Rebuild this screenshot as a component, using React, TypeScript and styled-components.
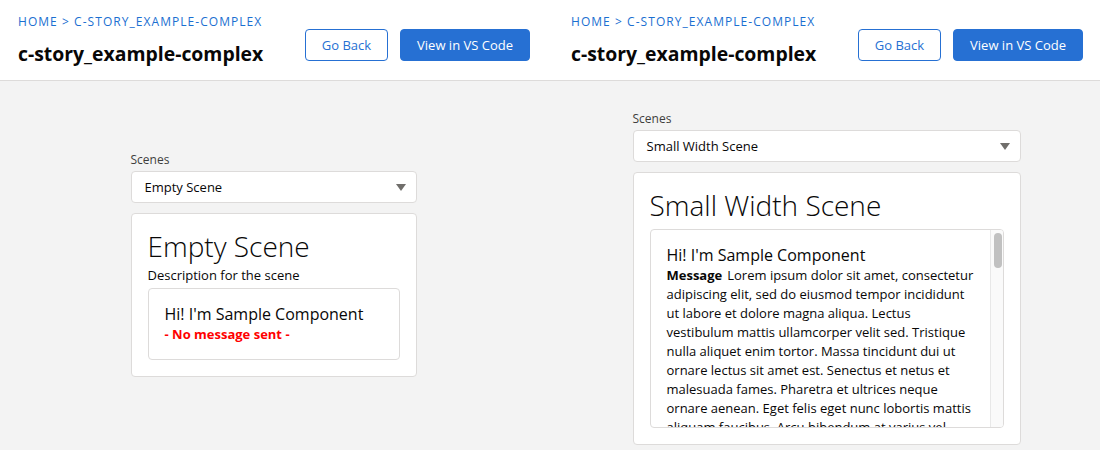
import React from "react";
import styled, { createGlobalStyle } from "styled-components";

const Global = createGlobalStyle`
  html, body { margin: 0; padding: 0; }
  body {
    background: #f3f3f3;
    font-family: "Open Sans", "Noto Sans", sans-serif;
    color: #080707;
    width: 1100px;
    height: 450px;
    overflow: hidden;
  }
`;

const Row = styled.div`
  display: grid;
  grid-template-columns: 547px 547px;
  column-gap: 6px;
  height: 450px;
  background: #f3f3f3;
`;

const Page = styled.div`
  display: flex;
  flex-direction: column;
  min-width: 0;
`;

const Header = styled.header<{ $last?: boolean }>`
  height: 81px;
  box-sizing: border-box;
  display: flex;
  align-items: center;
  justify-content: space-between;
  padding: 0 ${(p) => (p.$last ? 17 : 23)}px 0 18px;
  margin-right: ${(p) => (p.$last ? 0 : -6)}px;
  background: #fff;
  border-bottom: 1px solid #dddbda;
`;

const TitleBlock = styled.div`
  display: flex;
  flex-direction: column;
  gap: 11px;
  margin-top: 0;
`;

const Crumbs = styled.div`
  font-size: 12px;
  letter-spacing: 1.05px;
  color: #1b6fd1;
  text-transform: uppercase;
  line-height: 16px;
`;

const Title = styled.h1`
  margin: 0;
  font-size: 19.4px;
  font-weight: 700;
  line-height: 26px;
  color: #080707;
`;

const Actions = styled.div`
  display: flex;
  gap: 12px;
  margin-top: 9px;
`;

const Button = styled.button<{ $brand?: boolean }>`
  height: 32px;
  padding: 0 16px;
  border-radius: 4px;
  font-family: inherit;
  font-size: 13px;
  line-height: 30px;
  border: 1px solid #2670d3;
  background: ${(p) => (p.$brand ? "#2670d3" : "#fff")};
  color: ${(p) => (p.$brand ? "#fff" : "#2670d3")};
  cursor: pointer;
`;

const Body = styled.main<{ $top: number }>`
  flex: 1;
  display: flex;
  justify-content: center;
  align-items: flex-start;
  padding-top: ${(p) => p.$top}px;
`;

const Column = styled.div<{ $width: number }>`
  width: ${(p) => p.$width}px;
  display: flex;
  flex-direction: column;
`;

const Label = styled.label`
  font-size: 12px;
  line-height: 18px;
  color: #3e3e3c;
  margin-bottom: 2px;
`;

const Select = styled.div`
  height: 32px;
  box-sizing: border-box;
  border: 1px solid #dddbda;
  border-radius: 4px;
  background: #fff;
  display: flex;
  align-items: center;
  justify-content: space-between;
  padding: 0 10px 0 13px;
  font-size: 13px;
  color: #080707;
`;

const Caret = styled.span`
  width: 0;
  height: 0;
  border-left: 5.5px solid transparent;
  border-right: 5.5px solid transparent;
  border-top: 7px solid #706e6b;
`;

const Card = styled.section`
  margin-top: 10px;
  background: #fff;
  border: 1px solid #dddbda;
  border-radius: 4px;
  padding: 12px 16px 16px;
  display: flex;
  flex-direction: column;
`;

const SceneTitle = styled.h2`
  margin: 0;
  font-size: 28px;
  font-weight: 300;
  line-height: 40px;
  color: #080707;
`;

const SceneDesc = styled.p`
  margin: 0 0 4px;
  font-size: 13px;
  line-height: 18px;
`;

const Inner = styled.div`
  border: 1px solid #dddbda;
  border-radius: 4px;
  padding: 14px 16px 16px;
`;

const ScrollBox = styled.div`
  margin-top: 4px;
  height: 199px;
  box-sizing: border-box;
  border: 1px solid #dddbda;
  border-radius: 4px;
  display: flex;
  overflow: hidden;
`;

const ScrollContent = styled.div`
  flex: 1;
  min-width: 0;
  padding: 14px 16px 0;
  overflow: hidden;
`;

const ScrollTrack = styled.div`
  width: 13px;
  flex: none;
  background: #fafafa;
  border-left: 1px solid #e8e8e8;
  padding: 3px 0 0 3px;
  box-sizing: border-box;
`;

const ScrollThumb = styled.div`
  width: 8px;
  height: 35px;
  border-radius: 4px;
  background: #c1c1c1;
`;

const CompTitle = styled.div`
  font-size: 16px;
  line-height: 22px;
`;

const NoMsg = styled.div`
  font-size: 13px;
  font-weight: 700;
  color: #ff0000;
  line-height: 18px;
`;

const Message = styled.p`
  margin: 0;
  font-size: 13px;
  line-height: 19px;
`;

const Strong = styled.b`
  font-weight: 700;
  margin-right: 5px;
`;

const lorem =
  "Lorem ipsum dolor sit amet, consectetur adipiscing elit, sed do eiusmod tempor incididunt ut labore et dolore magna aliqua. Lectus vestibulum mattis ullamcorper velit sed. Tristique nulla aliquet enim tortor. Massa tincidunt dui ut ornare lectus sit amet est. Senectus et netus et malesuada fames. Pharetra et ultrices neque ornare aenean. Eget felis eget nunc lobortis mattis aliquam faucibus. Arcu bibendum at varius vel pharetra vel turpis nunc eget. Lorem dolor sed viverra ipsum nunc aliquet bibendum enim.";

function HeaderContent() {
  return (
    <>
      <TitleBlock>
        <Crumbs>Home &gt; c-story_example-complex</Crumbs>
        <Title>c-story_example-complex</Title>
      </TitleBlock>
      <Actions>
        <Button>Go Back</Button>
        <Button $brand>View in VS Code</Button>
      </Actions>
    </>
  );
}

export default function App() {
  return (
    <>
      <Global />
      <Row>
        <Page>
          <Header>
            <HeaderContent />
          </Header>
          <Body $top={70}>
            <Column $width={286}>
              <Label>Scenes</Label>
              <Select>
                Empty Scene
                <Caret />
              </Select>
              <Card>
                <SceneTitle>Empty Scene</SceneTitle>
                <SceneDesc>Description for the scene</SceneDesc>
                <Inner>
                  <CompTitle>Hi! I'm Sample Component</CompTitle>
                  <NoMsg>- No message sent -</NoMsg>
                </Inner>
              </Card>
            </Column>
          </Body>
        </Page>
        <Page>
          <Header $last>
            <HeaderContent />
          </Header>
          <Body $top={29}>
            <Column $width={388}>
              <Label>Scenes</Label>
              <Select>
                Small Width Scene
                <Caret />
              </Select>
              <Card>
                <SceneTitle>Small Width Scene</SceneTitle>
                <ScrollBox>
                  <ScrollContent>
                    <CompTitle>Hi! I'm Sample Component</CompTitle>
                    <Message>
                      <Strong>Message</Strong>
                      {lorem}
                    </Message>
                  </ScrollContent>
                  <ScrollTrack>
                    <ScrollThumb />
                  </ScrollTrack>
                </ScrollBox>
              </Card>
            </Column>
          </Body>
        </Page>
      </Row>
    </>
  );
}
